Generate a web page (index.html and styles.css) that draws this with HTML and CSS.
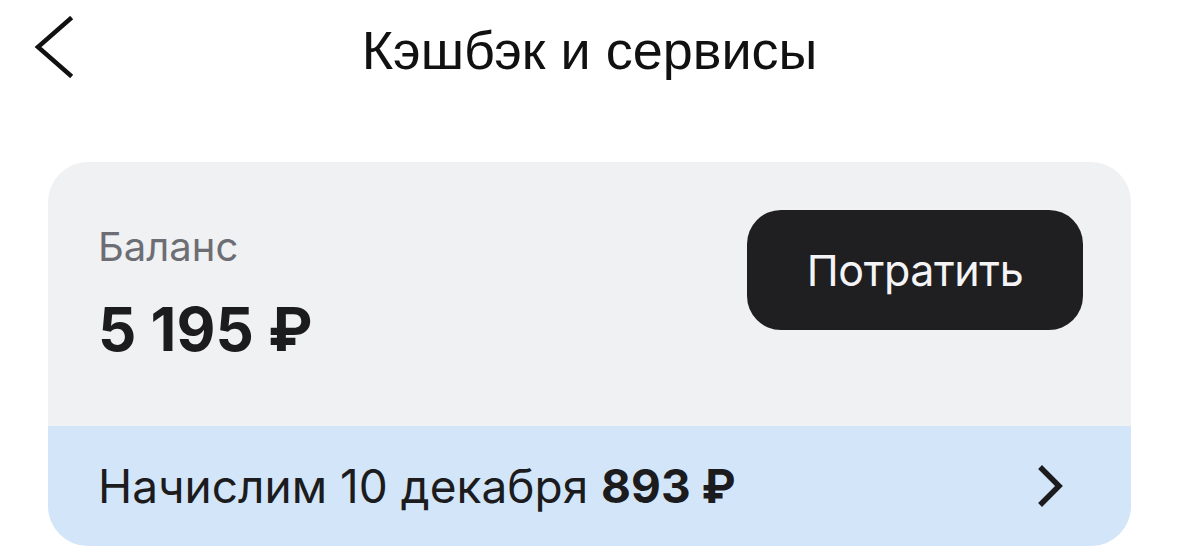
FILE: index.html
```html
<!DOCTYPE html>
<html lang="ru">
<head>
  <meta charset="UTF-8">
  <meta name="viewport" content="width=device-width, initial-scale=1.0">
  <title>Кэшбэк и сервисы</title>
  <link rel="stylesheet" href="styles.css">
</head>
<body>

  <header class="topbar">
    <button class="back-btn" aria-label="Назад">
      <svg width="40" height="62" viewBox="0 0 40 62">
        <path d="M36 3 L4 31 L36 59" fill="none" stroke="#111" stroke-width="4.5" stroke-linecap="square"/>
      </svg>
    </button>
    <h1 class="topbar-title">Кэшбэк и сервисы</h1>
  </header>

  <section class="cashback-card">
    <div class="balance-row">
      <div class="balance-info">
        <p class="balance-label">Баланс</p>
        <p class="balance-amount">5 195 ₽</p>
      </div>
      <button class="spend-btn">Потратить</button>
    </div>

    <div class="accrual-row">
      <p class="accrual-text">Начислим 10 декабря <b>893 ₽</b></p>
      <svg class="accrual-arrow" width="30" height="44" viewBox="0 0 30 44">
        <path d="M9 5 L26 22 L9 39" fill="none" stroke="#1c1c1e" stroke-width="5.5" stroke-linecap="square"/>
      </svg>
    </div>
  </section>

</body>
</html>
```

FILE: styles.css
```css
/* Page */
body {
  margin: 0;
  background-color: #ffffff;
  font-family: 'Inter', 'Roboto', sans-serif;
  color: #1c1c1e;
}

p {
  margin: 0;
}

/* Top bar */
.topbar {
  position: relative;
  height: 100px;
  display: flex;
  align-items: center;
  justify-content: center;
}

.back-btn {
  position: absolute;
  left: 34px;
  top: 16px;
  padding: 0;
  border: none;
  background: none;
  cursor: pointer;
}

.back-btn svg {
  display: block;
}

.topbar-title {
  margin: 0;
  font-family: 'Liberation Sans', Arial, sans-serif;
  font-size: 54px;
  font-weight: 400;
  color: #111;
}

/* Card */
.cashback-card {
  margin: 62px 48px 0;
  border-radius: 40px;
  overflow: hidden;
  background-color: #f0f1f3;
}

.balance-row {
  height: 264px;
  box-sizing: border-box;
  padding: 48px 48px 0 50px;
  display: flex;
  justify-content: space-between;
  align-items: flex-start;
}

.balance-label {
  margin-top: 12px;
  font-size: 40px;
  color: #6d6e73;
}

.balance-amount {
  margin-top: 22px;
  font-size: 60px;
  font-weight: 700;
}

.spend-btn {
  width: 336px;
  height: 120px;
  border: none;
  border-radius: 34px;
  background-color: #1f1f21;
  color: #f4f4f6;
  font-family: 'Inter', 'Roboto', sans-serif;
  font-size: 43px;
  letter-spacing: -0.4px;
  cursor: pointer;
}

.accrual-row {
  height: 120px;
  box-sizing: border-box;
  padding: 0 68px 0 50px;
  display: flex;
  align-items: center;
  justify-content: space-between;
  background-color: #d3e6f9;
}

.accrual-text {
  font-size: 46px;
  color: #1c1c1e;
}

.accrual-text b {
  font-weight: 700;
}

.accrual-arrow {
  display: block;
}
```
